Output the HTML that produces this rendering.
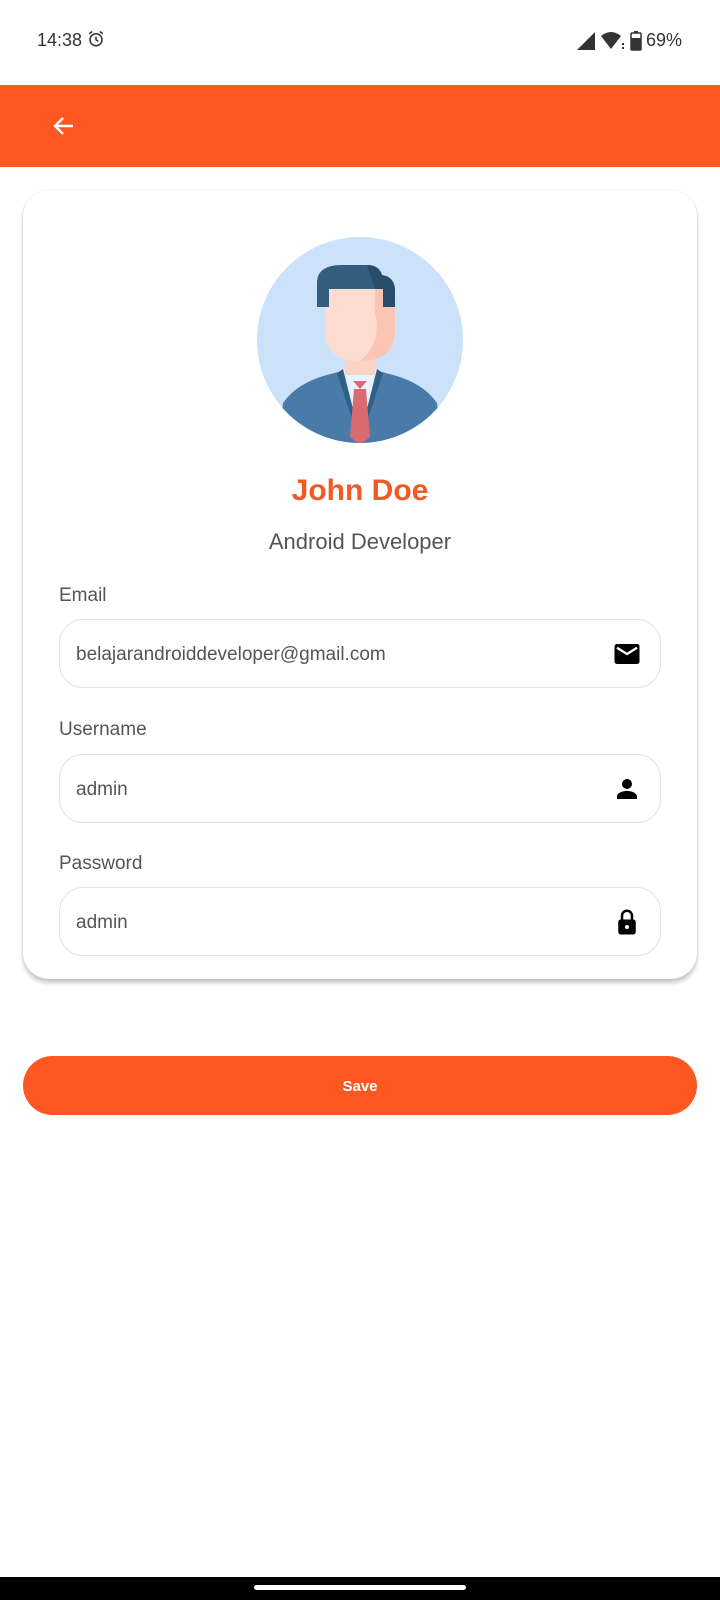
<!DOCTYPE html>
<html><head><meta charset="utf-8"><style>
*{margin:0;padding:0;box-sizing:border-box}
body{width:720px;height:1600px;background:#fff;font-family:"Liberation Sans",Roboto,sans-serif;position:relative;overflow:hidden}
.abs{position:absolute}
.sb{top:30px;font-size:18px;color:#333}
.bar{top:85px;left:0;width:720px;height:82px;background:#ff5722}
.card{left:23px;top:190px;width:674px;height:789px;border-radius:26px;background:#fff;box-shadow:0 4px 4px rgba(0,0,0,.22),0 0 1px rgba(0,0,0,.2)}
.label{left:59px;font-size:19px;color:#555}
.field{left:59px;width:602px;height:69px;border:1.5px solid #e2e2e2;border-radius:24px;font-size:19px;color:#555;padding-left:16px;line-height:70px}
.ico{position:absolute;right:18px;top:19px}
.save{left:23px;top:1056px;width:674px;height:59px;border-radius:30px;background:#ff5722;color:#fff;font-size:15px;font-weight:bold;text-align:center;line-height:61px}
</style></head><body>
<div class="abs sb" style="left:37px">14:38 <svg width="18" height="18" viewBox="0 0 24 24" style="vertical-align:-2px"><circle cx="12" cy="13" r="8" fill="none" stroke="#333" stroke-width="2"/><path d="M12 9v4l3 2M3 5l4-3M21 5l-4-3" stroke="#333" stroke-width="2" fill="none"/></svg></div>
<div class="abs sb" style="left:576px;display:flex;align-items:center;gap:4px">
<svg width="20" height="20" viewBox="0 0 20 20"><path d="M19 1V19H1Z" fill="#333"/></svg>
<svg width="26" height="20" viewBox="0 0 26 20"><path d="M1 5Q11-3 21 5L11 18Z" fill="#333"/><rect x="22" y="12" width="2" height="2" fill="#333"/><rect x="22" y="16" width="2" height="2" fill="#333"/></svg>
<svg width="12" height="20" viewBox="0 0 12 20"><rect x="4" y="0" width="4" height="2" fill="#333"/><rect x="1" y="2" width="10" height="17" rx="1" fill="none" stroke="#333" stroke-width="1.5"/><rect x="1" y="7" width="10" height="12" fill="#333"/></svg>
<span>69%</span></div>
<div class="abs bar"><svg class="abs" style="left:52px;top:29px" width="24" height="24" viewBox="0 0 24 24"><path d="M21 12H4M11 4l-8 8 8 8" stroke="#fff" stroke-width="2.4" fill="none"/></svg></div>
<div class="abs card"></div>
<svg class="abs" style="left:257px;top:237px" width="206" height="206" viewBox="0 0 206 206">
<defs><clipPath id="c"><circle cx="103" cy="103" r="103"/></clipPath></defs>
<circle cx="103" cy="103" r="103" fill="#cce2fb"/>
<path d="M103 0A103 103 0 0 1 103 206A103 103 0 0 0 103 0Z" fill="#bdd7f7" clip-path="url(#c)"/>
<g clip-path="url(#c)">
<path d="M22 206L26 166Q40 146 70 138L85 134H121L136 138Q166 146 180 166L184 206Z" fill="#4a7aa8"/>
<path d="M80 136L103 206L126 136L120 132H86Z" fill="#305f87"/>
<path d="M86 132L103 200L120 132Z" fill="#e8f2fd"/>
<path d="M97 152L109 152L113 200L103 208L93 200Z" fill="#d96a70"/>
<path d="M96 144L103 152L110 144Z" fill="#d96a70"/>
<rect x="88" y="104" width="30" height="34" fill="#fcd4c6"/>
<path d="M68 58Q68 38 103 38Q138 38 138 58V94Q138 124 103 124Q68 124 68 94Z" fill="#fedcd1"/>
<path d="M103 38Q138 38 138 58V94Q138 124 103 124Q125 106 118 76V48Z" fill="#fcc4b3"/>
<path d="M60 70V46Q60 28 85 28H110Q122 28 125 38Q138 40 138 54V70H126V52H72V70Z" fill="#345e80"/>
<path d="M110 28Q122 28 125 38Q138 40 138 54V70H126V52H118Z" fill="#284c6a"/>
</g></svg>
<div class="abs" style="left:0;width:720px;top:474px;text-align:center;font-size:30px;font-weight:bold;color:#f15a24">John Doe</div>
<div class="abs" style="left:0;width:720px;top:529px;text-align:center;font-size:22px;color:#555">Android Developer</div>
<div class="abs label" style="top:585px">Email</div>
<div class="abs field" style="top:619px">belajarandroiddeveloper@gmail.com<svg class="ico" width="30" height="30" viewBox="0 0 24 24"><rect x="2" y="4" width="20" height="16" rx="2" fill="#000"/><path d="M4 7l8 5 8-5" stroke="#fff" stroke-width="1.8" fill="none"/></svg></div>
<div class="abs label" style="top:719px">Username</div>
<div class="abs field" style="top:754px">admin<svg class="ico" width="30" height="30" viewBox="0 0 24 24"><circle cx="12" cy="8" r="4" fill="#000"/><path d="M4 20v-2c0-3 5-4.5 8-4.5s8 1.5 8 4.5v2Z" fill="#000"/></svg></div>
<div class="abs label" style="top:853px">Password</div>
<div class="abs field" style="top:887px">admin<svg class="ico" width="30" height="30" viewBox="0 0 24 24"><path d="M8 10V7a4 4 0 0 1 8 0v3" stroke="#000" stroke-width="2" fill="none"/><rect x="5" y="10" width="14" height="12" rx="2" fill="#000"/><circle cx="12" cy="16" r="1.6" fill="#fff"/></svg></div>
<div class="abs save">Save</div>
<div class="abs" style="left:0;top:1577px;width:720px;height:23px;background:#000"><div style="width:212px;height:5px;background:#fff;border-radius:3px;margin:8px auto 0"></div></div>
</body></html>
